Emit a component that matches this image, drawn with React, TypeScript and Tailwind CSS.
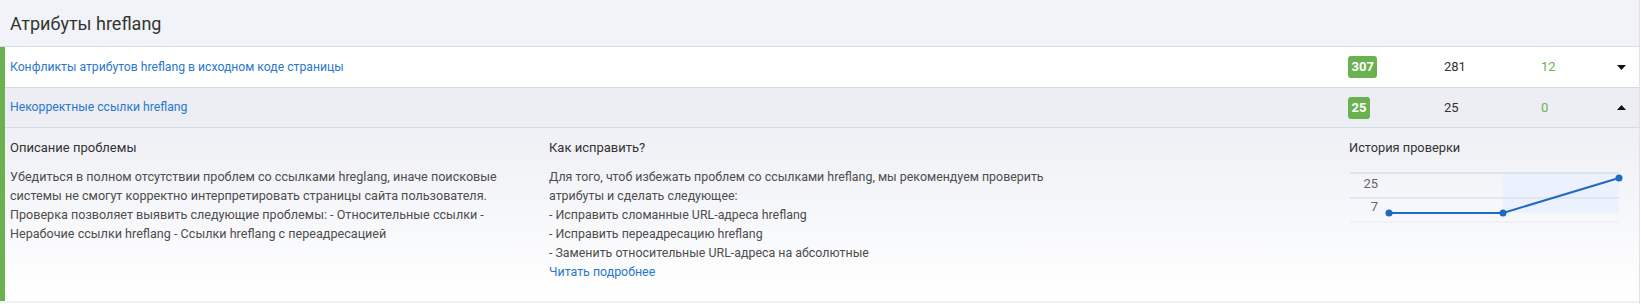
import React from 'react'

interface IssueRow {
  title: string
  total: number
  pages: number
  fresh: number
  open?: boolean
}

const rows: IssueRow[] = [
  { title: 'Конфликты атрибутов hreflang в исходном коде страницы', total: 307, pages: 281, fresh: 12 },
  { title: 'Некорректные ссылки hreflang', total: 25, pages: 25, fresh: 0, open: true },
]

function Caret({ up }: { up?: boolean }) {
  return (
    <svg width="9" height="5" viewBox="0 0 9 5" className="block">
      {up ? <polygon points="0,5 9,5 4.5,0" fill="#111" /> : <polygon points="0,0 9,0 4.5,5" fill="#111" />}
    </svg>
  )
}

function HistoryChart() {
  return (
    <svg width="275" height="60" viewBox="0 0 275 60" className="block">
      <rect x="154" y="8" width="116" height="40" fill="#ecf2fd" />
      <line x1="1" y1="8" x2="270" y2="8" stroke="#dde2eb" strokeWidth="2" />
      <line x1="1" y1="33" x2="270" y2="33" stroke="#e2e6ee" strokeWidth="2" />
      <line x1="1" y1="57" x2="270" y2="57" stroke="#e6e9ef" strokeWidth="1" />
      <text x="29" y="23" textAnchor="end" fontSize="13" fill="#666" fontFamily="Roboto, sans-serif">25</text>
      <text x="29" y="46" textAnchor="end" fontSize="13" fill="#666" fontFamily="Roboto, sans-serif">7</text>
      <polyline points="40,48 154,48 270,13" fill="none" stroke="#1e6bc1" strokeWidth="2" />
      <circle cx="40" cy="48" r="3.5" fill="#1e6bc1" />
      <circle cx="154" cy="48" r="3.5" fill="#1e6bc1" />
      <circle cx="270" cy="13" r="3.5" fill="#1e6bc1" />
    </svg>
  )
}

function Details() {
  return (
    <div className="flex h-[173px] bg-gradient-to-b from-[#eef0f5] to-white pl-[5px] pt-[10px] text-[13px] leading-[19px]">
      {/* Описание */}
      <div className="w-[539px] shrink-0">
        <p className="text-[#333]">Описание проблемы</p>
        <p className="mt-[10px] w-[505px] text-[12.6px] text-[#4d4d4d]">
          Убедиться в полном отсутствии проблем со ссылками hreglang, иначе поисковые системы не смогут корректно
          интерпретировать страницы сайта пользователя. Проверка позволяет выявить следующие проблемы: - Относительные
          ссылки - Нерабочие ссылки hreflang - Ссылки hreflang с переадресацией
        </p>
      </div>

      {/* Как исправить */}
      <div className="w-[800px] shrink-0">
        <p className="text-[#333]">Как исправить?</p>
        <div className="mt-[10px] w-[530px] text-[12.4px] text-[#4d4d4d]">
          <p>Для того, чтоб избежать проблем со ссылками hreflang, мы рекомендуем проверить атрибуты и сделать следующее:</p>
          <p>- Исправить сломанные URL-адреса hreflang</p>
          <p>- Исправить переадресацию hreflang</p>
          <p>- Заменить относительные URL-адреса на абсолютные</p>
          <a className="text-[#2a78cb]">Читать подробнее</a>
        </div>
      </div>

      {/* История */}
      <div className="flex-1">
        <p className="text-[12.8px] text-[#333]">История проверки</p>
        <div className="mt-[8px]">
          <HistoryChart />
        </div>
      </div>
    </div>
  )
}

export default function App() {
  return (
    <div className="w-[1641px] h-[304px] overflow-hidden bg-white font-['Roboto',sans-serif]">
      <div className="w-[1640px] h-[304px] border-r border-[#dfe2e8] flex flex-col">
        <div className="h-[47px] shrink-0 flex items-center px-[10px] bg-[#f2f3f8] border-b border-[#d3dbe8] text-[18px] text-[#333]">
          Атрибуты hreflang
        </div>

        <div className="border-l-[5px] border-[#6ab150]">
          {rows.map((row) => (
            <div key={row.title}>
              <div
                className={`flex items-center border-b border-[#d3dbe8] text-[13px] ${
                  row.open ? 'bg-[#eceef4] h-[40px]' : 'bg-white h-[41px]'
                }`}
              >
                <div className="w-[1343px] shrink-0 pl-[5px] text-[12.2px] text-[#2a78cb]">{row.title}</div>
                <div className="w-[96px] shrink-0">
                  <span className="inline-block h-[22px] px-[3.5px] rounded-[3px] bg-[#6ab150] text-white font-bold leading-[22px]">
                    {row.total}
                  </span>
                </div>
                <div className="w-[97px] shrink-0 text-[#333]">{row.pages}</div>
                <div className="w-[76px] shrink-0 text-[#6ab150]">{row.fresh}</div>
                <Caret up={row.open} />
              </div>
              {row.open && <Details />}
            </div>
          ))}
        </div>

        <div className="h-[2px] bg-[#f0f1f6]" />
      </div>
    </div>
  )
}
